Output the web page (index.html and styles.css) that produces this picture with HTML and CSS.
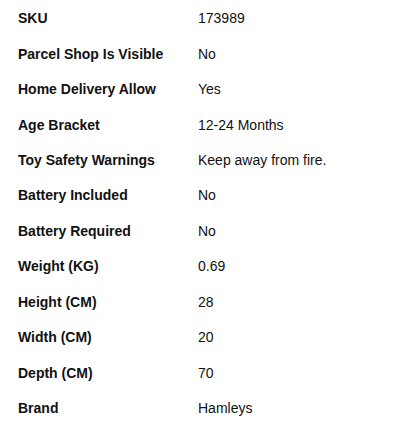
FILE: index.html
```html
<!DOCTYPE html>
<html>
<head>
<meta charset="utf-8">
<link rel="stylesheet" href="styles.css">
</head>
<body>
<table class="specs">
<tbody>
<tr><th>SKU</th><td>173989</td></tr>
<tr><th>Parcel Shop Is Visible</th><td>No</td></tr>
<tr><th>Home Delivery Allow</th><td>Yes</td></tr>
<tr><th>Age Bracket</th><td>12-24 Months</td></tr>
<tr><th>Toy Safety Warnings</th><td>Keep away from fire.</td></tr>
<tr><th>Battery Included</th><td>No</td></tr>
<tr><th>Battery Required</th><td>No</td></tr>
<tr><th>Weight (KG)</th><td>0.69</td></tr>
<tr><th>Height (CM)</th><td>28</td></tr>
<tr><th>Width (CM)</th><td>20</td></tr>
<tr><th>Depth (CM)</th><td>70</td></tr>
<tr><th>Brand</th><td>Hamleys</td></tr>
</tbody>
</table>
</body>
</html>
```
FILE: styles.css
```css
html, body {
  margin: 0;
  padding: 0;
  background: #fff;
}
body {
  font-family: "Liberation Sans", Arial, sans-serif;
  font-size: 14px;
  color: #111;
}
.specs {
  border-collapse: collapse;
  border-spacing: 0;
  table-layout: fixed;
  width: 380px;
}
.specs tr {
  height: 35.45px;
}
.specs th,
.specs td {
  padding: 0;
  text-align: left;
  vertical-align: middle;
  line-height: 16px;
}
.specs th {
  font-weight: bold;
  width: 180px;
  padding-left: 18px;
  padding-top: 1px;
}
.specs td {
  font-weight: normal;
  padding-top: 1px;
}
```
